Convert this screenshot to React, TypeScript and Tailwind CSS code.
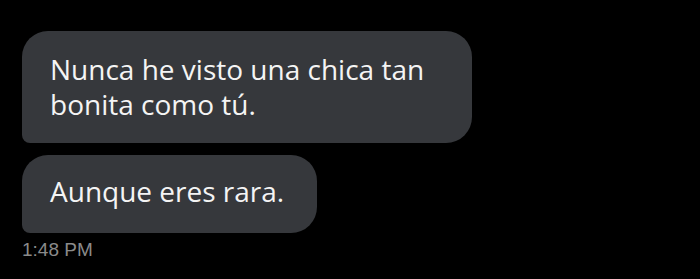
export default function App() {
  return (
    <main className="h-[279px] w-[700px] bg-black pl-[22px] pt-[31px] font-['Open_Sans',sans-serif]">
      <div className="flex flex-col items-start gap-3">
        <div className="w-[450px] rounded-[26px] rounded-bl-[8px] bg-[#36383c] pl-[28px] pr-[30px] pt-[21px] pb-[21px] text-[28px] leading-[35px] text-[#f4f4f4]">
          Nunca he visto una chica tan bonita como tú.
        </div>
        <div className="rounded-[26px] rounded-bl-[8px] bg-[#36383c] pl-[28px] pr-[33px] pt-[19px] pb-[24px] text-[28px] leading-[35px] text-[#f4f4f4]">
          Aunque eres rara.
        </div>
      </div>
      <p className="mt-[6px] font-['Liberation_Sans',sans-serif] text-[19px] leading-[22px] text-[#8a8a8a]">
        1:48 PM
      </p>
    </main>
  );
}
